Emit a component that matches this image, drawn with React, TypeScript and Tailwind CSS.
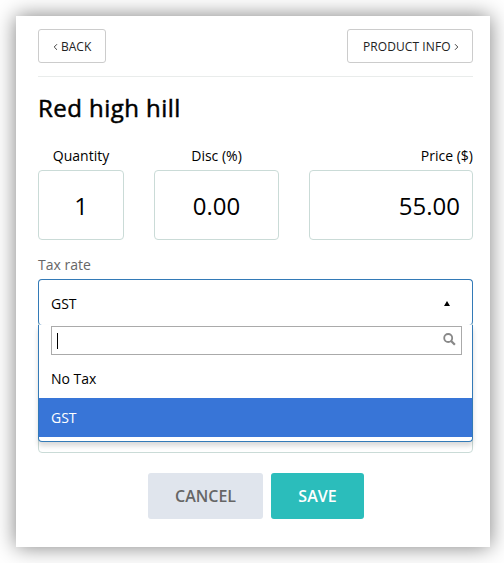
import React from "react";

function Angle({ flip = false }: { flip?: boolean }) {
  return (
    <svg width="5" height="8" viewBox="0 0 5 8" fill="none" stroke="#444" strokeWidth="1" className={flip ? "mt-px rotate-180" : "mt-px"}>
      <path d="M4 1.2 1.2 4 4 6.8" />
    </svg>
  );
}

function Field({ label, value, width, align }: { label: string; value: string; width: string; align: string }) {
  return (
    <div className={`${width} ${align}`}>
      <div className="h-[24px] text-[14px] leading-[20px] whitespace-nowrap">{label}</div>
      <div className="h-[70px] rounded-[4px] border border-[#cadbd7] px-[12px] text-[24px] leading-[69px]">{value}</div>
    </div>
  );
}

export default function App() {
  return (
    <div className="h-[563px] w-[504px] overflow-hidden bg-white p-4 font-['Open_Sans','Noto_Sans',sans-serif] text-black">
      <main className="h-[531px] w-[474px] bg-white pt-[13px] pr-[17px] pl-[22px] shadow-[0_0_20px_rgba(0,0,0,0.5)]">
        <header className="flex h-[48px] items-start justify-between border-b border-[#e9eceb] text-[12px] text-[#222]">
          <button className="flex h-[34px] w-[68px] items-center gap-[3px] rounded-[3px] border border-[#ccc] pl-[14px]">
            <Angle />
            <span className="mt-px">BACK</span>
          </button>
          <button className="flex h-[34px] w-[126px] items-center gap-[3px] rounded-[3px] border border-[#ccc] pl-[15px] whitespace-nowrap">
            <span className="mt-px tracking-[0.08px]">PRODUCT INFO</span>
            <Angle flip />
          </button>
        </header>
        <h1 className="mt-[14px] h-[55px] text-[24px] leading-[33px] font-normal tracking-[0.45px] [-webkit-text-stroke:0.5px_black]">Red high hill</h1>
        <section className="flex justify-between">
          <Field label="Quantity" value="1" width="w-[86px]" align="text-center" />
          <Field label="Disc (%)" value="0.00" width="w-[125px]" align="text-center" />
          <Field label="Price ($)" value="55.00" width="w-[164px]" align="text-right" />
        </section>
        <div className="mt-[15px] h-[24px] text-[14px] leading-[20px] text-[#666]">Tax rate</div>
        <section className="relative h-[174px] rounded-[4px] border border-[#cadbd7]">
          <div className="absolute -top-px -left-px w-[435px] text-[14px]">
            <div className="flex h-[46px] items-center justify-between rounded-[4px] border border-b-0 border-[#337ab7] bg-white pt-[2px] pr-[21px] pl-[12px]">
              <span className="-mt-px">GST</span>
              <svg width="6" height="5" viewBox="0 0 6 5" className="mr-px">
                <path d="M3 0 6 5H0Z" />
              </svg>
            </div>
            <div className="h-[117px] rounded-b-[4px] border border-t-0 border-[#337ab7] bg-white pt-px shadow-[0_4px_5px_rgba(0,0,0,0.15)]">
              <div className="mr-[10px] ml-[12px] flex h-[29px] items-center justify-between border border-[#aaa] pr-[5px] pl-[5px]">
                <span className="h-4 w-px bg-black" />
                <svg width="13" height="13" viewBox="0 0 13 13" fill="none" stroke="#888" className="mb-[3px]">
                  <circle cx="5.2" cy="5" r="4" strokeWidth="1.8" />
                  <path d="m8.1 8 3.8 3.7" strokeWidth="2.3" />
                </svg>
              </div>
              <div className="mt-[4px] flex h-[39px] items-center px-[12px]">No Tax</div>
              <div className="flex h-[39px] items-center bg-[#3875d7] px-[12px] text-white">GST</div>
            </div>
          </div>
        </section>
        <footer className="mt-[20px] flex justify-center gap-[8px] pl-px text-[16px] font-semibold">
          <button className="h-[46px] w-[115px] rounded-[3px] bg-[#e0e5ed] text-[#666]">CANCEL</button>
          <button className="h-[46px] w-[93px] rounded-[3px] bg-[#2bbdbb] text-white">SAVE</button>
        </footer>
      </main>
    </div>
  );
}
